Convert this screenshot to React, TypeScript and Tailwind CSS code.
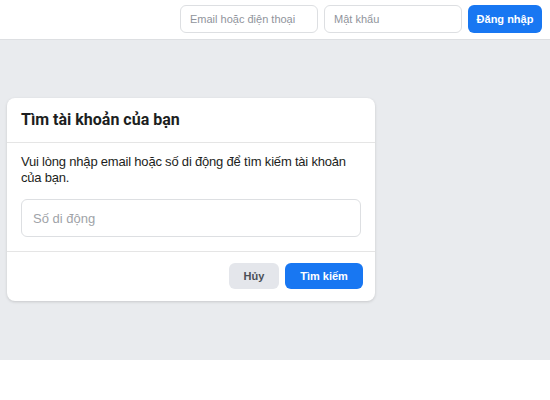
export default function App() {
  return (
    <div className="flex min-h-[400px] w-full flex-col bg-white font-['Liberation_Sans',Arial,sans-serif]">
      {/* Top bar */}
      <header className="flex h-[40px] items-start justify-end gap-[6px] border-b border-[#dddfe2] bg-white pr-[8px] pt-[5px]">
        <input
          className="h-[28px] w-[138px] rounded-[6px] border border-[#dddfe2] px-[9px] text-[11px] text-[#1c1e21] outline-none placeholder:text-[#90949c]"
          placeholder="Email hoặc điện thoại"
        />
        <input
          className="h-[28px] w-[138px] rounded-[6px] border border-[#dddfe2] px-[9px] text-[11px] text-[#1c1e21] outline-none placeholder:text-[#90949c]"
          placeholder="Mật khẩu"
          type="password"
        />
        <button className="h-[28px] w-[74px] rounded-[6px] bg-[#1877f2] text-[11px] font-bold text-white">
          Đăng nhập
        </button>
      </header>

      {/* Gray area */}
      <main className="flex h-[320px] items-start bg-[#e9ebee] pl-[7px] pt-[58px]">
        <div className="w-[368px] rounded-[8px] bg-white shadow-[0_1px_3px_rgba(0,0,0,0.15)]">
          <div className="flex h-[45px] items-center border-b border-[#e5e5e5] px-[14px]">
            <h2 className="font-['Roboto',sans-serif] text-[16px] font-bold text-[#1c1e21]">
              Tìm tài khoản của bạn
            </h2>
          </div>
          <div className="px-[14px] pb-[14px] pt-[11px]">
            <p className="text-[13px] leading-[16px] tracking-[-0.2px] text-[#1c1e21]">
              Vui lòng nhập email hoặc số di động để tìm kiếm tài khoản của bạn.
            </p>
            <input
              className="mt-[13px] h-[38px] w-[340px] rounded-[6px] border border-[#dddfe2] px-[11px] text-[13px] text-[#1c1e21] outline-none placeholder:text-[#a0a3a8]"
              placeholder="Số di động"
            />
          </div>
          <div className="flex justify-end gap-[6px] border-t border-[#e5e5e5] px-[12px] pb-[12px] pt-[11px]">
            <button className="h-[26px] w-[50px] rounded-[6px] bg-[#e4e6eb] text-[11px] font-bold text-[#4b4f56]">
              Hủy
            </button>
            <button className="h-[26px] w-[78px] rounded-[6px] bg-[#1877f2] text-[11px] font-bold text-white">
              Tìm kiếm
            </button>
          </div>
        </div>
      </main>

      <div className="h-[40px] bg-white" />
    </div>
  );
}
